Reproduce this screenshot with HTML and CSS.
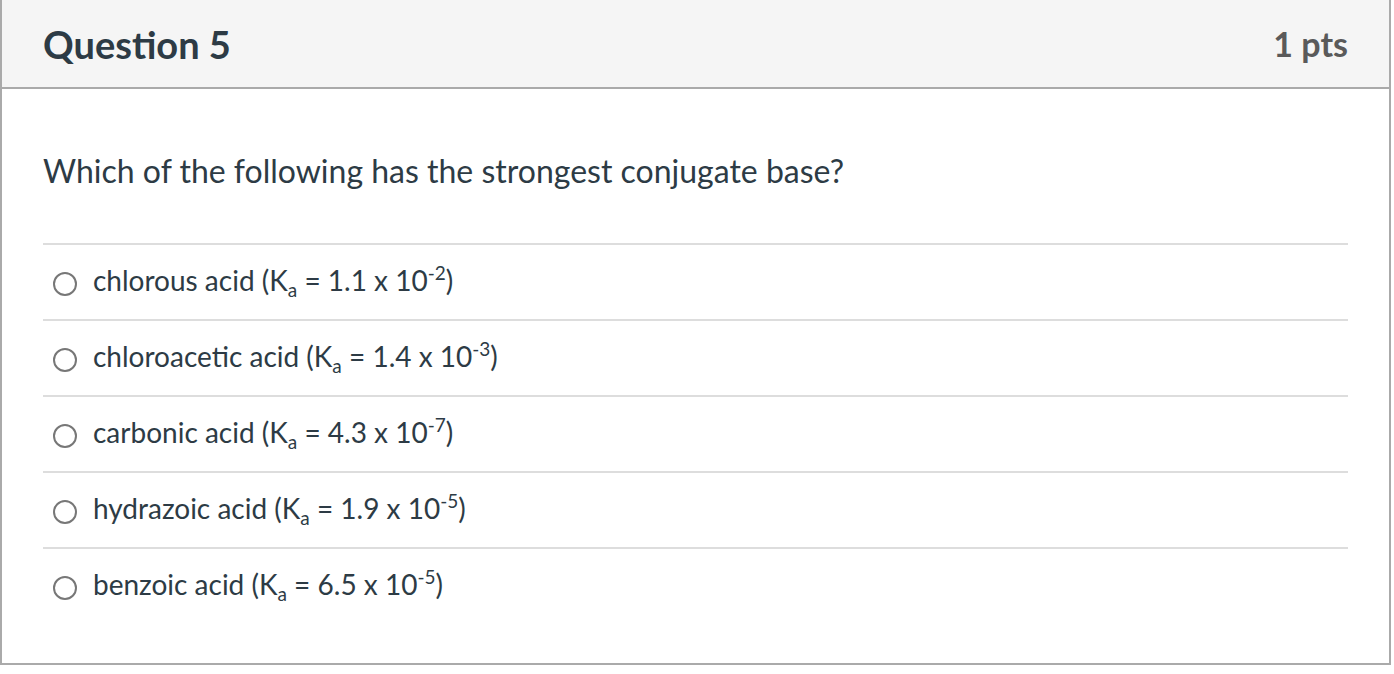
FILE: index.html
```html
<!DOCTYPE html>
<html>
<head>
<meta charset="utf-8">
<link rel="stylesheet" href="styles.css">
</head>
<body>
<div class="question">
  <div class="header">
    <h2 class="title">Question 5</h2>
    <div class="pts">1 pts</div>
  </div>
  <div class="content">
    <p class="prompt">Which of the following has the strongest conjugate base?</p>
    <div class="answers">
      <label class="answer"><span class="radio"></span><span class="text">chlorous acid (K<sub>a</sub> = 1.1 x 10<sup>-2</sup>)</span></label>
      <label class="answer"><span class="radio"></span><span class="text">chloroacetic acid (K<sub>a</sub> = 1.4 x 10<sup>-3</sup>)</span></label>
      <label class="answer"><span class="radio"></span><span class="text">carbonic acid (K<sub>a</sub> = 4.3 x 10<sup>-7</sup>)</span></label>
      <label class="answer"><span class="radio"></span><span class="text">hydrazoic acid (K<sub>a</sub> = 1.9 x 10<sup>-5</sup>)</span></label>
      <label class="answer"><span class="radio"></span><span class="text">benzoic acid (K<sub>a</sub> = 6.5 x 10<sup>-5</sup>)</span></label>
    </div>
  </div>
</div>
</body>
</html>
```
FILE: styles.css
```css
html, body {
  margin: 0;
  padding: 0;
  background: #fff;
}
body {
  font-family: Lato, "Noto Sans", sans-serif;
  color: #2d3b45;
}
.question {
  width: 1391px;
  box-sizing: border-box;
  border: 2px solid #aaaaaa;
  border-top: 0;
  height: 665px;
}
.header {
  height: 87px;
  background: #f5f5f5;
  border-bottom: 2px solid #aaaaaa;
  display: flex;
  justify-content: space-between;
  align-items: center;
  padding: 0 41px;
}
.title {
  margin: 0;
  font-size: 38px;
  font-weight: 700;
  color: #2d3b45;
}
.pts {
  font-size: 34px;
  font-weight: 700;
  color: #5a5a5a;
}
.content {
  padding: 0 41px;
}
.prompt {
  margin: 0 0 52px 0;
  padding-top: 62px;
  font-size: 32px;
  line-height: 40px;
}
.answers {
  display: flex;
  flex-direction: column;
}
.answer {
  display: flex;
  align-items: center;
  height: 74px;
  border-top: 2px solid #dddddd;
  font-size: 28px;
}
.radio {
  width: 20px;
  height: 20px;
  border: 2px solid #777;
  border-radius: 50%;
  margin: 4px 16px 0 10px;
  flex: none;
}
.text {
  padding-bottom: 4px;
}
.text sub, .text sup {
  font-size: 19px;
  line-height: 0;
}
.text sub { vertical-align: -6px; }
.text sup { vertical-align: 11px; }
```
